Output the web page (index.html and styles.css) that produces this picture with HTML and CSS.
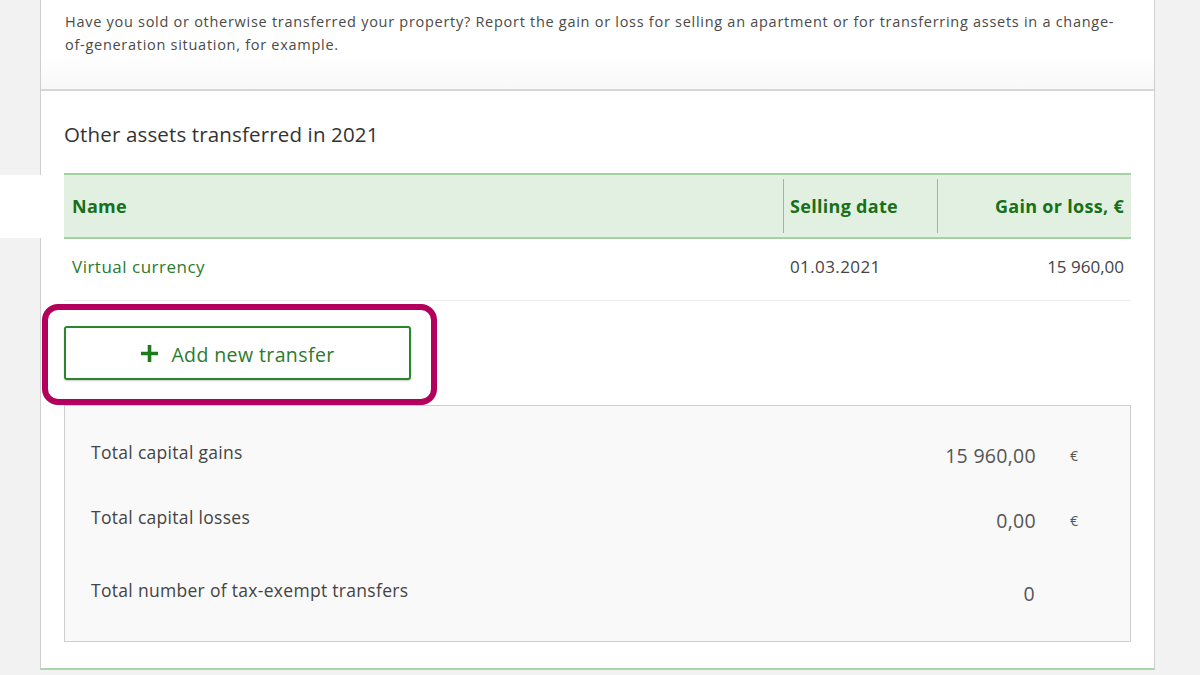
FILE: index.html
```html
<!DOCTYPE html>
<html lang="en">
<head>
<meta charset="utf-8">
<title>Other assets transferred</title>
<link rel="stylesheet" href="styles.css">
</head>
<body>
<div class="page">
  <div class="intro">
    <p>Have you sold or otherwise transferred your property? Report the gain or loss for selling an apartment or for transferring assets in a change-of-generation situation, for example.</p>
  </div>
  <div class="section">
    <h2 class="heading">Other assets transferred in 2021</h2>
    <table class="assets">
      <thead>
        <tr>
          <th class="col-name">Name</th>
          <th class="col-date sep">Selling date</th>
          <th class="col-gain sep">Gain or loss, €</th>
        </tr>
      </thead>
      <tbody>
        <tr>
          <td class="col-name name-link">Virtual currency</td>
          <td class="col-date">01.03.2021</td>
          <td class="col-gain">15 960,00</td>
        </tr>
      </tbody>
    </table>
    <div class="add-wrap">
      <button class="add-btn" type="button">
        <svg class="plus" width="19" height="19" viewBox="0 0 19 19" aria-hidden="true"><path d="M9.5 1v17M1 9.5h17" stroke="#1d7a1d" stroke-width="3.6" fill="none"/></svg>
        <span>Add new transfer</span>
      </button>
    </div>
    <div class="summary">
      <div class="sum-row r1">
        <span class="sum-label">Total capital gains</span>
        <span class="sum-value">15 960,00</span>
        <span class="sum-unit">€</span>
      </div>
      <div class="sum-row r2">
        <span class="sum-label">Total capital losses</span>
        <span class="sum-value">0,00</span>
        <span class="sum-unit">€</span>
      </div>
      <div class="sum-row r3">
        <span class="sum-label">Total number of tax-exempt transfers</span>
        <span class="sum-value count">0</span>
        <span class="sum-unit"></span>
      </div>
    </div>
  </div>
</div>
</body>
</html>
```
FILE: styles.css
```css
* { box-sizing: border-box; }
html, body { margin: 0; padding: 0; }
body {
  background: #f2f2f2;
  font-family: "Open Sans", "Noto Sans", sans-serif;
  color: #444;
  height: 675px;
  overflow: hidden;
}
.page {
  position: relative;
  margin-left: 40px;
  width: 1115px;
  background: #fff;
  border-left: 1px solid #cfcfcf;
  border-right: 1px solid #cfcfcf;
  border-bottom: 2px solid #a9d7a9;
}
.page::before {
  content: "";
  position: absolute;
  left: -41px;
  top: 175px;
  width: 43px;
  height: 63px;
  background: #fff;
}
.intro {
  height: 91px;
  padding: 10px 36px 0 24px;
  border-bottom: 2px solid #d6d6d6;
  background: linear-gradient(#fff 60%, #f8f8f8);
}
.intro p {
  margin: 0;
  font-size: 14.5px;
  letter-spacing: 0.72px;
  line-height: 23px;
  color: #4a4a4a;
}
.section {
  padding: 0 23px 26px 23px;
}
.heading {
  margin: 0;
  padding: 29px 0 0 0;
  height: 82px;
  font-size: 20.5px;
  letter-spacing: 0.15px;
  font-weight: 400;
  color: #333;
  line-height: 28px;
}
.assets {
  width: 1067px;
  border-collapse: collapse;
  table-layout: fixed;
}
.assets th {
  background: #e2f0e2;
  color: #187018;
  font-weight: 700;
  font-size: 18px;
  letter-spacing: 0.3px;
  height: 64px;
  border-top: 2px solid #a3d3a3;
  border-bottom: 2px solid #a3d3a3;
  text-align: left;
  padding: 0 8px;
  position: relative;
}
.assets th.sep::before {
  content: "";
  position: absolute;
  left: 0;
  top: 4px;
  bottom: 4px;
  width: 1px;
  background: #8cc28c;
}
.col-name { width: 719px; }
.col-date { width: 154px; }
.col-gain { width: 194px; text-align: right !important; padding-right: 7px !important; }
.assets th.col-date { padding-left: 7px; }
.assets td {
  height: 62px;
  font-size: 17px;
  color: #444;
  border-bottom: 1px solid #ececec;
  padding: 0 8px 5px 8px;
}
.assets td.col-date { padding-left: 7px; letter-spacing: 0.4px; }
.assets td.name-link { color: #2c7a2c; letter-spacing: 0.5px; }
.add-wrap {
  position: relative;
  width: 347px;
  margin-top: 25px;
}
.add-wrap::after {
  content: "";
  position: absolute;
  left: -22px;
  top: -22px;
  right: -26px;
  bottom: -25px;
  border: 6px solid #b3005c;
  border-radius: 16px;
  pointer-events: none;
}
.add-btn {
  width: 347px;
  height: 54px;
  background: #fff;
  border: 2px solid #2a862a;
  border-radius: 3px;
  box-shadow: 0 1px 2px rgba(0,0,0,0.2);
  display: flex;
  align-items: center;
  justify-content: center;
  gap: 12px;
  font-family: inherit;
  font-size: 19.5px;
  letter-spacing: 0.4px;
  color: #2c7a2c;
  padding: 4px 0 0 0;
  cursor: pointer;
}
.plus { display: block; margin-top: -2px; }
.summary {
  margin-top: 25px;
  width: 1067px;
  height: 237px;
  background: #f9f9f9;
  border: 1px solid #cecece;
  padding: 26px 0 0 26px;
}
.sum-row {
  display: grid;
  grid-template-columns: 1fr auto 94px;
  height: 40px;
  align-items: center;
  font-size: 17.5px;
  letter-spacing: 0.3px;
  color: #444;
}
.r2 { margin-top: 25px; }
.r3 { margin-top: 33px; }
.sum-value { padding-top: 8px; color: #555; font-size: 19.5px; letter-spacing: 0.3px; }
.sum-value.count { padding-right: 1px; }
.sum-unit { padding: 8px 0 0 34px; font-size: 14px; color: #555; }
```
